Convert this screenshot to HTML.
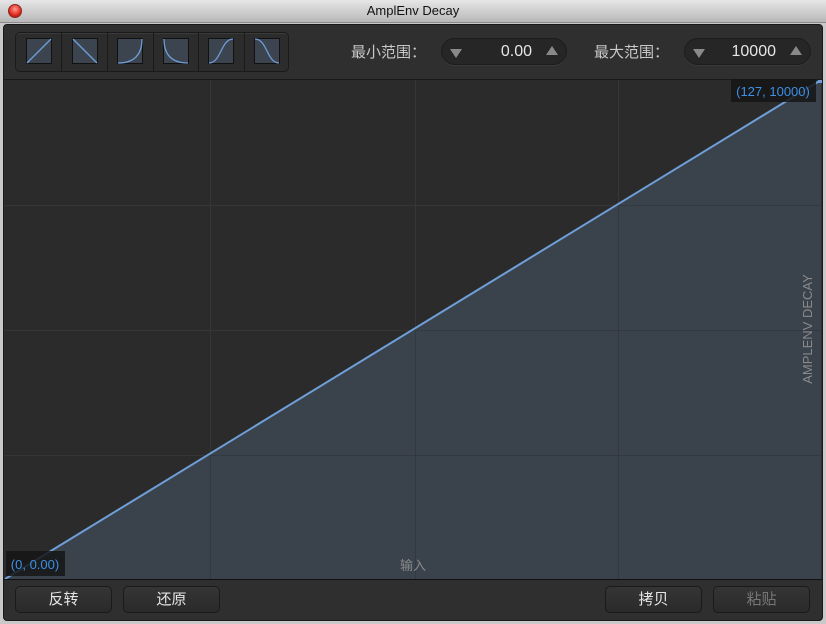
<!DOCTYPE html>
<html><head><meta charset="utf-8"><style>
*{margin:0;padding:0;box-sizing:border-box}
body{width:826px;height:624px;background:#c9c9c9;font-family:"Liberation Sans","Noto Sans CJK SC",sans-serif;overflow:hidden;position:relative}
.title{position:absolute;left:0;top:0;width:826px;height:23px;background:linear-gradient(#e6e6e6,#b8b8b8);border-bottom:1px solid #8a8a8a;text-align:center;font-size:13px;line-height:22px;color:#111}
.close{position:absolute;left:8px;top:4px;width:14px;height:14px;border-radius:50%;background:radial-gradient(circle at 50% 35%,#ff9a8f,#e0281b 60%,#9a1008);border:1px solid #8a2a20}
.panel{position:absolute;left:3px;top:24px;width:820px;height:597px;background:#2f2f2f;border:1px solid #1a1a1a;border-radius:4px}
.grp{position:absolute;left:15px;top:32px;width:274px;height:40px;border:1px solid #1a1a1a;border-radius:5px;background:#2c2c2c;box-shadow:inset 0 1px 0 #3a3a3a}
.lbl{position:absolute;top:41px;font-size:15px;color:#c8c8c8}
.spin{position:absolute;top:38px;height:27px;border-radius:14px;background:#262626;border:1px solid #1c1c1c;box-shadow:0 1px 0 #3a3a3a;color:#e6e6e6;font-size:16px;line-height:25px}
.spin .v{position:absolute;right:34px}
.tri{position:absolute;top:9px;width:0;height:0;border-left:6px solid transparent;border-right:6px solid transparent}
.btn{position:absolute;top:586px;width:97px;height:27px;border:1px solid #1a1a1a;border-radius:5px;background:linear-gradient(#353535,#2a2a2a);color:#e6e6e6;font-size:15px;text-align:center;line-height:25px}
</style></head><body>
<div class="title">AmplEnv Decay</div><div class="close"></div>
<div class="panel"></div>
<div class="grp"></div>
<svg style="position:absolute;left:0;top:0" width="826" height="624">
<defs><clipPath id="c"><polygon points="5,579 821,80 821,579"/></clipPath></defs>
<g stroke="#1a1a1a" stroke-width="1">
<line x1="61.5" y1="33" x2="61.5" y2="71"/><line x1="107.5" y1="33" x2="107.5" y2="71"/><line x1="153.5" y1="33" x2="153.5" y2="71"/><line x1="198.5" y1="33" x2="198.5" y2="71"/><line x1="244.5" y1="33" x2="244.5" y2="71"/>
</g>
<g fill="#3c4450" stroke="#111" stroke-width="1">
<rect x="26.5" y="38.5" width="25" height="25"/><rect x="72.5" y="38.5" width="25" height="25"/><rect x="117.5" y="38.5" width="25" height="25"/><rect x="163.5" y="38.5" width="25" height="25"/><rect x="208.5" y="38.5" width="25" height="25"/><rect x="254.5" y="38.5" width="25" height="25"/>
</g>
<g fill="none" stroke="#6f9fd8" stroke-width="1.3">
<path d="M27 63 L51 39"/><path d="M73 39 L97 63"/>
<path d="M118 63 Q142 63 142 39"/><path d="M164 39 Q164 63 188 63"/>
<path d="M209 63 C221 63 221 39 233 39"/><path d="M255 39 C267 39 267 63 279 63"/>
</g>
<rect x="5" y="80" width="816" height="499" fill="#2b2b2b"/>
<g stroke="#363636" stroke-width="1">
<line x1="210.5" y1="80" x2="210.5" y2="579"/><line x1="415.5" y1="80" x2="415.5" y2="579"/><line x1="618.5" y1="80" x2="618.5" y2="579"/>
<line x1="5" y1="205.5" x2="821" y2="205.5"/><line x1="5" y1="330.5" x2="821" y2="330.5"/><line x1="5" y1="455.5" x2="821" y2="455.5"/>
</g>
<polygon points="5,579 821,80 821,579" fill="#3a424c"/>
<g stroke="#323942" stroke-width="1" clip-path="url(#c)">
<line x1="210.5" y1="80" x2="210.5" y2="579"/><line x1="415.5" y1="80" x2="415.5" y2="579"/><line x1="618.5" y1="80" x2="618.5" y2="579"/>
<line x1="5" y1="205.5" x2="821" y2="205.5"/><line x1="5" y1="330.5" x2="821" y2="330.5"/><line x1="5" y1="455.5" x2="821" y2="455.5"/>
</g>
<line x1="5" y1="579" x2="821" y2="80" stroke="#6f9fd8" stroke-width="2"/>
<rect x="818" y="79" width="4" height="4" fill="#6f9fd8"/>
<line x1="3" y1="579.5" x2="823" y2="579.5" stroke="#111"/>
<line x1="3" y1="79.5" x2="823" y2="79.5" stroke="#1a1a1a"/>
<rect x="731" y="79" width="85" height="23" fill="#151515" opacity="0.85"/>
<text x="773" y="96" font-size="13" fill="#3d8fe8" text-anchor="middle" font-family="Liberation Sans">(127, 10000)</text>
<rect x="6" y="551" width="59" height="25" fill="#151515" opacity="0.85"/>
<text x="35" y="569" font-size="13" fill="#3d8fe8" text-anchor="middle" font-family="Liberation Sans">(0, 0.00)</text>
<text x="413" y="570" font-size="13" fill="#8a8a8a" text-anchor="middle" font-family="Liberation Sans,Noto Sans CJK SC,sans-serif">输入</text>
<text transform="translate(812,329) rotate(-90)" font-size="13" fill="#8a8a8a" text-anchor="middle" font-family="Liberation Sans">AMPLENV DECAY</text>
</svg>
<div class="lbl" style="left:351px">最小范围：</div>
<div class="spin" style="left:441px;width:126px"><div class="tri" style="left:8px;top:10px;border-top:9px solid #8a8a8a"></div><span class="v">0.00</span><div class="tri" style="right:8px;top:7px;border-bottom:9px solid #8a8a8a"></div></div>
<div class="lbl" style="left:594px">最大范围：</div>
<div class="spin" style="left:684px;width:127px"><div class="tri" style="left:8px;top:10px;border-top:9px solid #8a8a8a"></div><span class="v">10000</span><div class="tri" style="right:8px;top:7px;border-bottom:9px solid #8a8a8a"></div></div>
<div class="btn" style="left:15px">反转</div>
<div class="btn" style="left:123px">还原</div>
<div class="btn" style="left:605px">拷贝</div>
<div class="btn" style="left:713px;color:#777">粘贴</div>
</body></html>
